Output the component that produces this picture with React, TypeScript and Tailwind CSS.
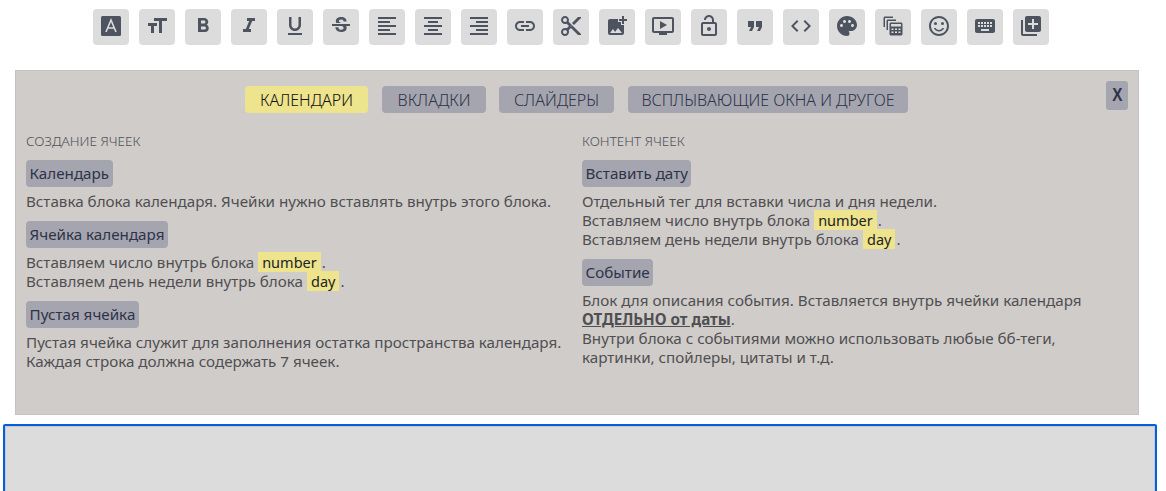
import React from "react";
import {
  MdFormatSize, MdFormatBold, MdFormatItalic, MdFormatUnderlined, MdStrikethroughS,
  MdFormatAlignLeft, MdFormatAlignCenter, MdFormatAlignRight, MdLink, MdContentCut,
  MdAddPhotoAlternate, MdOutlineOndemandVideo, MdOutlineLockOpen, MdFormatQuote, MdCode,
  MdPalette, MdOutlineSentimentSatisfied, MdKeyboard, MdLibraryAdd,
} from "react-icons/md";

const cls = "w-6 h-6";
function LetterA() {
  return (
    <svg viewBox="0 0 24 24" className={cls}>
      <rect x="2" y="2" width="20" height="20" rx="1.500" fill="#4d5460" />
      <path d="M7 18 L12 6 L17 18 M8.600 14 H15.400" stroke="#dcdcdc" strokeWidth="1.600" fill="none" />
    </svg>
  );
}
function CalcCopy() {
  return (
    <svg viewBox="0 0 24 24" className={cls} fill="#4d5460">
      <path d="M2.500 4C2.500 3.200 3.200 2.500 4 2.500H12V4H4V13H2.500z" />
      <path d="M5.500 7C5.500 6.200 6.200 5.500 7 5.500H15V7H7V16H5.500z" />
      <path d="M10 8.500h10c.8 0 1.500.7 1.500 1.500v10c0 .8-.7 1.500-1.500 1.500H10c-.8 0-1.500-.7-1.500-1.500V10c0-.8.7-1.500 1.500-1.500zm0 1.500v2.500h10V10zM10.500 14.500V16h2v-1.500zm3.500 0V16h2v-1.500zm3.500 0V16h2v-1.500zM10.500 17.500V19h2v-1.500zm3.500 0V19h2v-1.500zm3.500 0V19h2v-1.500z" fillRule="evenodd" />
    </svg>
  );
}

const icons = [
  <LetterA />, <MdFormatSize className={cls} />, <MdFormatBold className={cls} />, <MdFormatItalic className={cls} />,
  <MdFormatUnderlined className={cls} />, <MdStrikethroughS className={cls} />, <MdFormatAlignLeft className={cls} />,
  <MdFormatAlignCenter className={cls} />, <MdFormatAlignRight className={cls} />, <MdLink className={cls} />,
  <MdContentCut className={cls} />, <MdAddPhotoAlternate className={cls} />, <MdOutlineOndemandVideo className={cls} />,
  <MdOutlineLockOpen className={cls} />, <MdFormatQuote className={cls} />, <MdCode className={cls} />,
  <MdPalette className={cls} />, <CalcCopy />, <MdOutlineSentimentSatisfied className={cls} />,
  <MdKeyboard className={cls} />, <MdLibraryAdd className={cls} />,
];

const Tag = ({ children }: { children: React.ReactNode }) => (
  <div className="mt-[7px] mb-[5px]">
    <span className="inline-flex h-[27px] items-center rounded-[4px] bg-[#a5a5b0] px-[3.5px] text-[#2e3347]">{children}</span>
  </div>
);
const Hl = ({ children }: { children: React.ReactNode }) => (
  <span className="mr-[1px] bg-[#ede48d] px-[4px] text-[14.5px] text-[#222]">{children}</span>
);

export default function App() {
  return (
    <div className="h-[491px] overflow-hidden bg-white font-['Noto_Sans',sans-serif]">
      <div className="flex gap-[10px] pl-[93px] pt-[9px]">
        {icons.map((ic, i) => (
          <div key={i} className="flex h-[36px] w-[36px] items-center justify-center rounded-[4px] bg-[#dcdcdc] pb-[2px] text-[#4d5460]">{ic}</div>
        ))}
      </div>
      <div className="relative mx-[15px] mt-[25px] h-[345px] w-[1124px] border border-[#c6c2bf] bg-[#d0ccc9] pl-[10px] pt-[15px]">
        <button className="absolute right-[10px] top-[10px] h-[29px] w-[22px] rounded-[3px] bg-[#a5a5b0] font-['Liberation_Sans',sans-serif] text-[19px] font-bold text-[#2e3347]">
          <span className="inline-block scale-x-[0.8]">Х</span>
        </button>
        <div className="flex justify-center pr-[11px]">
          <button className="h-[27px] w-[123px] rounded-[4px] bg-[#ede48d] text-[16px] font-light text-[#111]">КАЛЕНДАРИ</button>
          <button className="ml-[14px] h-[27px] w-[104px] rounded-[4px] bg-[#a5a5b0] text-[16px] font-light text-[#2e3347]">ВКЛАДКИ</button>
          <button className="ml-[13px] h-[27px] w-[115px] rounded-[4px] bg-[#a5a5b0] text-[16px] font-light text-[#2e3347]">СЛАЙДЕРЫ</button>
          <button className="ml-[14px] h-[27px] w-[280px] rounded-[4px] bg-[#a5a5b0] text-[16px] font-light text-[#2e3347]">ВСПЛЫВАЮЩИЕ ОКНА И ДРУГОЕ</button>
        </div>
        <div className="mt-[18px] grid grid-cols-[556px_1fr] text-[15.2px] leading-[19px] text-[#4f4f52]">
          <div>
            <div className="text-[13.5px] font-light leading-[20px] text-[#4f5159]">СОЗДАНИЕ ЯЧЕЕК</div>
            <div className="h-[2px]" />
            <Tag>Календарь</Tag>
            <p>Вставка блока календаря. Ячейки нужно вставлять внутрь этого блока.</p>
            <div className="h-[3px]" />
            <Tag>Ячейка календаря</Tag>
            <p>Вставляем число внутрь блока <Hl>number</Hl>.<br />Вставляем день недели внутрь блока <Hl>day</Hl>.</p>
            <div className="h-[3px]" />
            <Tag>Пустая ячейка</Tag>
            <p>Пустая ячейка служит для заполнения остатка пространства календаря.<br />Каждая строка должна содержать 7 ячеек.</p>
          </div>
          <div>
            <div className="text-[13.5px] font-light leading-[20px] text-[#4f5159]">КОНТЕНТ ЯЧЕЕК</div>
            <div className="h-[2px]" />
            <Tag>Вставить дату</Tag>
            <p>Отдельный тег для вставки числа и дня недели.<br />Вставляем число внутрь блока <Hl>number</Hl>.<br />Вставляем день недели внутрь блока <Hl>day</Hl>.</p>
            <div className="h-[3px]" />
            <Tag>Событие</Tag>
            <p>Блок для описания события. Вставляется внутрь ячейки календаря<br /><b className="underline">ОТДЕЛЬНО от даты</b>.<br />Внутри блока с событиями можно использовать любые бб-теги,<br />картинки, спойлеры, цитаты и т.д.</p>
          </div>
        </div>
      </div>
      <div className="mx-[3px] mt-[9px] h-[100px] w-[1154px] rounded-[2px] border-2 border-[#0060df] bg-[#dcdcdc] shadow-[inset_0_0_0_1px_#c8c8c8]" />
    </div>
  );
}
